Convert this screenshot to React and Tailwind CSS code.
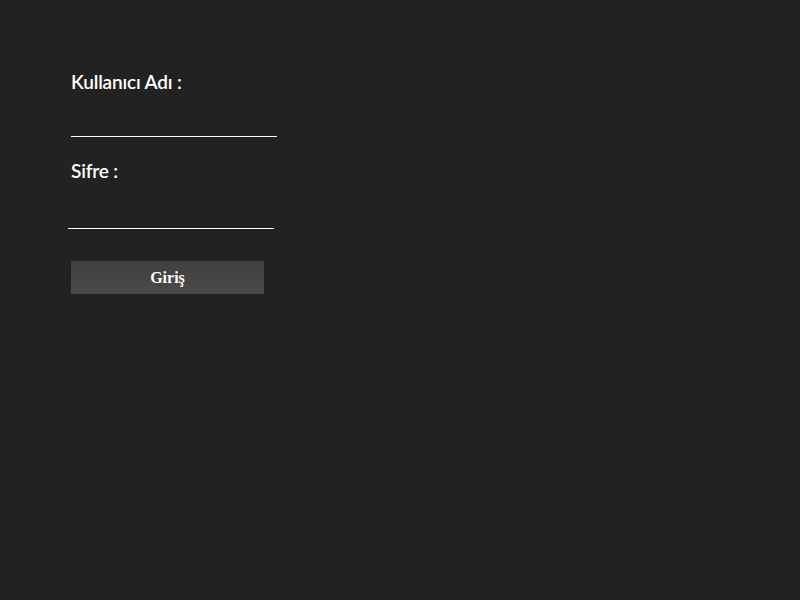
import React, { useState } from 'react';

export default function App() {
  const [user, setUser] = useState('');
  const [pass, setPass] = useState('');

  return (
    <div className="min-h-[600px] w-full bg-[#222222] pt-[70px] pl-[71px]">
      <div className="flex flex-col w-[206px]">
        {/* Kullanıcı adı */}
        <label className="text-[19px] leading-[24px] font-semibold text-white [font-family:Lato,'DejaVu_Sans',sans-serif] tracking-[-0.15px]">
          Kullanıcı Adı :
        </label>
        <input
          type="text"
          value={user}
          onChange={(e) => setUser(e.target.value)}
          className="mt-[18px] h-[25px] w-[206px] bg-transparent border-0 border-b border-white text-white outline-none"
        />

        {/* Şifre */}
        <label className="mt-[22px] text-[19px] leading-[24px] font-semibold text-white [font-family:Lato,'DejaVu_Sans',sans-serif] tracking-[-0.15px]">
          Sifre :
        </label>
        <input
          type="password"
          value={pass}
          onChange={(e) => setPass(e.target.value)}
          className="mt-[21px] ml-[-3px] h-[25px] w-[206px] bg-transparent border-0 border-b border-white text-white outline-none"
        />

        <button className="mt-[32px] h-[33px] w-[193px] bg-gradient-to-b from-[#404040] to-[#4a4a4a] text-white text-[16px] font-bold [font-family:'Liberation_Serif','DejaVu_Serif',serif]">
          Giriş
        </button>
      </div>
    </div>
  );
}
